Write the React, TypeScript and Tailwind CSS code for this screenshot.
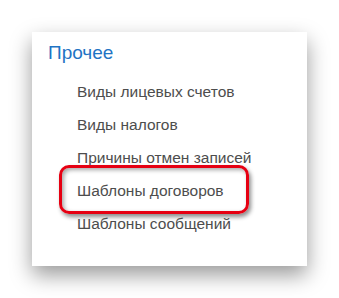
const items = [
  'Виды лицевых счетов',
  'Виды налогов',
  'Причины отмен записей',
  'Шаблоны договоров',
  'Шаблоны сообщений',
];

export default function App() {
  return (
    <div className="w-[339px] h-[298px] bg-white pt-[32px] pl-[32px]" style={{ fontFamily: '"Liberation Sans", Arial, sans-serif' }}>
      <div className="w-[275px] h-[234px] bg-white shadow-[0_9px_20px_rgba(0,0,0,0.4)] pt-[9px]">
        <div className="pl-[16px] h-[24px] leading-[24px] text-[19px] text-[#1f74c4]">Прочее</div>
        <div className="mt-[10px] flex flex-col">
          {items.map((t, i) => (
            <div key={t} className="relative h-[33px] leading-[33px] pl-[45px] text-[15.5px] text-[#4d4d4d]">
              {i === 3 && (
                <div className="absolute left-[27px] top-[-9px] w-[190px] h-[49px] rounded-[10px] border-[3px] border-[#e60012] shadow-[2px_3px_4px_rgba(0,0,0,0.45),inset_2px_2px_4px_rgba(0,0,0,0.35)]" />
              )}
              <span className="relative">{t}</span>
            </div>
          ))}
        </div>
      </div>
    </div>
  );
}
